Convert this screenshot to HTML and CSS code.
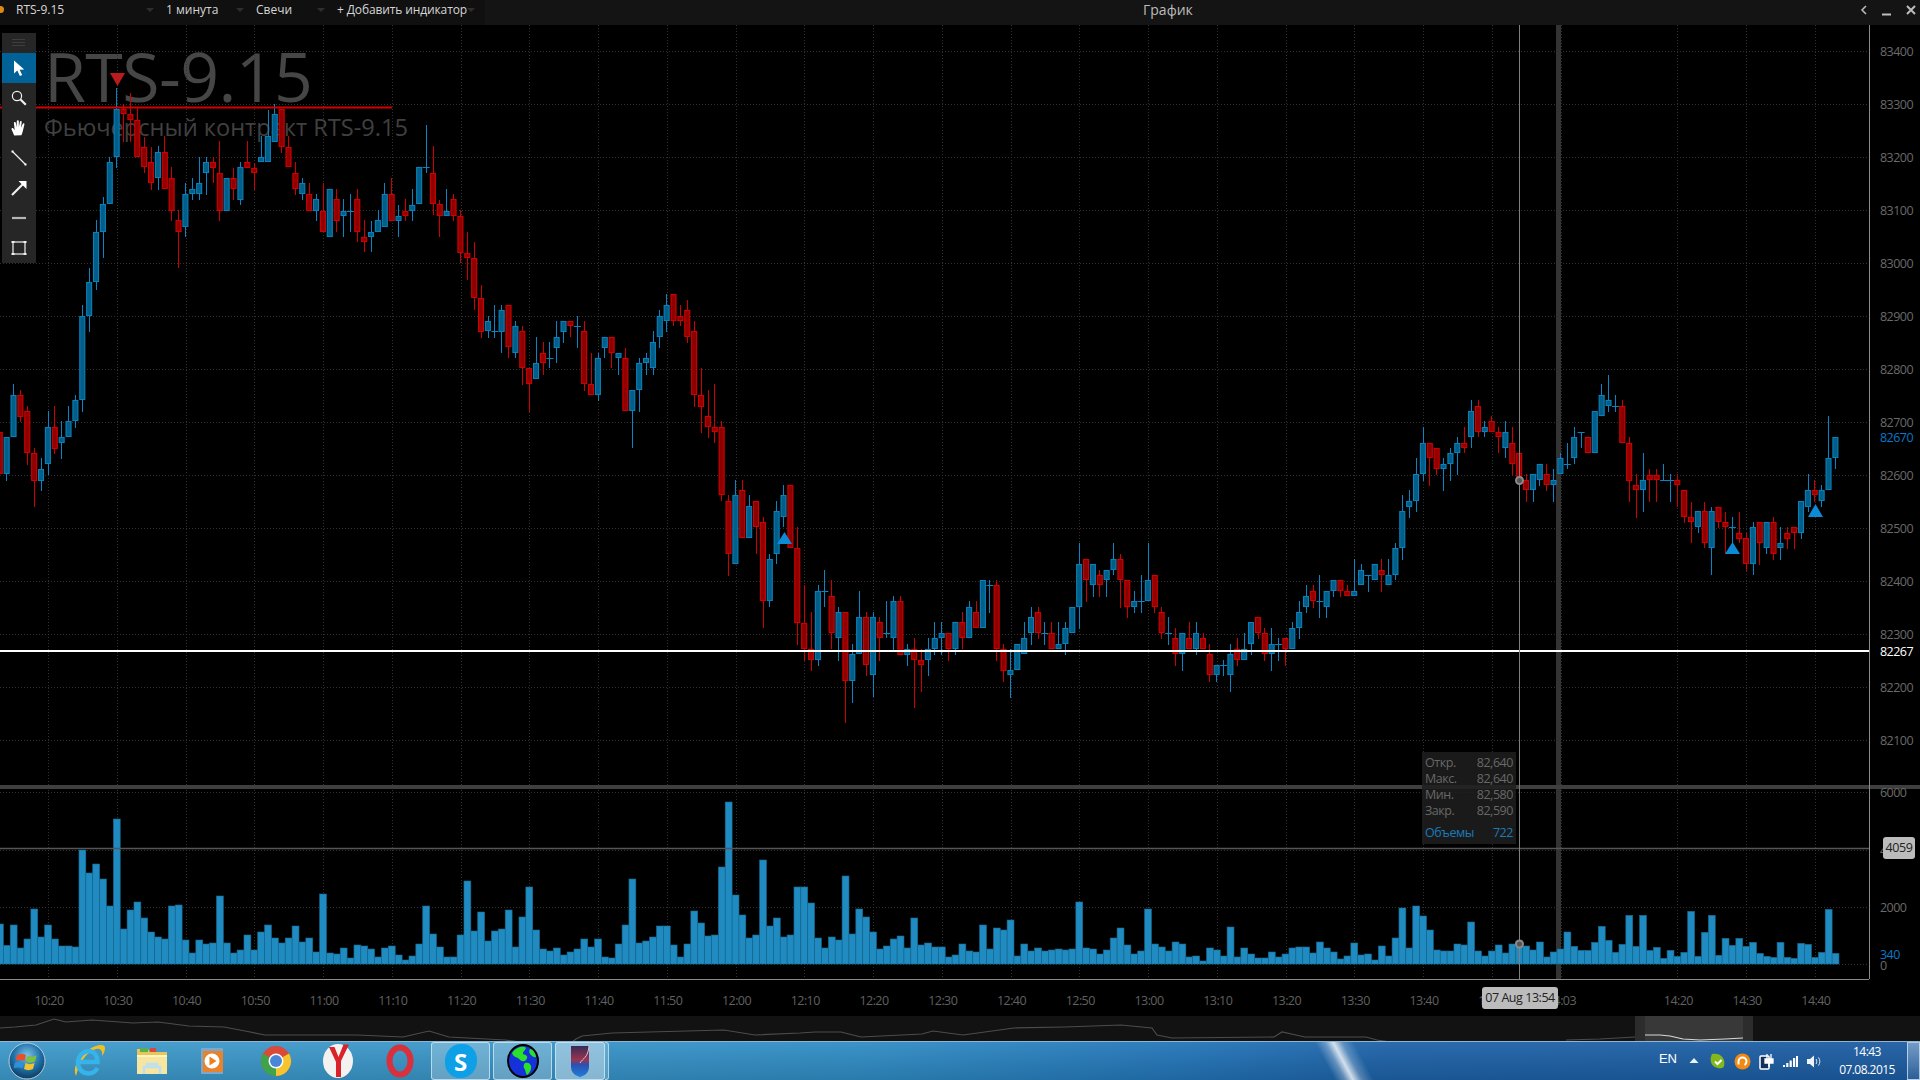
FILE: index.html
```html
<!DOCTYPE html>
<html lang="ru">
<head>
<meta charset="utf-8">
<title>График</title>
<link rel="stylesheet" href="styles.css">
</head>
<body>
<div class="app">
  <header class="topbar">
    <span class="conn-dot"></span>
    <div class="tb-tools">
      <div class="tb-item w-symbol"><span>RTS-9.15</span><i class="caret"></i></div>
      <div class="tb-item w-period"><span>1 минута</span><i class="caret"></i></div>
      <div class="tb-item w-type"><span>Свечи</span><i class="caret"></i></div>
      <div class="tb-item w-ind"><span>+ Добавить индикатор</span><i class="caret"></i></div>
    </div>
    <div class="tb-title">График</div>
    <div class="tb-win">
      <svg width="10" height="12" viewBox="0 0 10 12"><path d="M7 2 3 6l4 4" class="win-stroke"/></svg>
      <svg width="12" height="12" viewBox="0 0 12 12"><path d="M1 10.5h9" class="win-stroke win-bold"/></svg>
      <svg width="12" height="12" viewBox="0 0 12 12"><path d="M2 2l8 8M10 2l-8 8" class="win-stroke win-bold"/></svg>
    </div>
  </header>

  <main class="chart">
    <div class="watermark">
      <div class="wm-big">RTS-9.15</div>
      <div class="wm-small">Фьючерсный контракт RTS-9.15</div>
    </div>
    <svg id="plot" class="plot" viewBox="0 25 1920 991" width="1920" height="991"></svg>

    <nav class="tools">
      <div class="tool tool-handle"><svg width="16" height="8" viewBox="0 0 16 8"><path d="M1 .5h13M1 3.5h13M1 6.5h13" class="i-handle"/></svg></div>
      <div class="tool tool-on"><svg width="18" height="18" viewBox="0 0 18 18"><path d="M4 1.5v13l3.3-3 2.6 5.5 2.3-1-2.6-5.3 4.6-.3z" class="i-fill"/></svg></div>
      <div class="tool"><svg width="18" height="18" viewBox="0 0 18 18"><circle cx="7" cy="7" r="4.6" class="i-line"/><path d="M10.5 10.5l5.3 5.3" class="i-thick"/></svg></div>
      <div class="tool"><svg width="18" height="18" viewBox="0 0 18 18"><path d="M4.2 16.6 1.6 10.4c-.5-1.3 1-1.9 1.8-.9l1.3 1.7L3.9 4c-.1-1.3 1.7-1.4 1.9-.2l.8 4.4.2-6.1c.1-1.3 2-1.3 2 0l.1 6 1-5.3c.3-1.2 2-.9 1.8.3l-.7 5.6 1.7-3.8c.5-1.1 2-.5 1.7.6l-1.6 6.7c-.3 1.5-.8 2.6-1.4 4z" class="i-fill"/></svg></div>
      <div class="tool"><svg width="18" height="18" viewBox="0 0 18 18"><path d="M2.5 2.5l13 13" class="i-line"/><rect x="1.5" y="1.5" width="2" height="2" class="i-fill"/><rect x="14.5" y="14.5" width="2" height="2" class="i-fill"/></svg></div>
      <div class="tool"><svg width="18" height="18" viewBox="0 0 18 18"><path d="M2 16 15 3" class="i-thick"/><path d="M8.5 2h8v8z" class="i-fill"/></svg></div>
      <div class="tool"><svg width="18" height="18" viewBox="0 0 18 18"><path d="M2 9h14" class="i-thick i-dim"/></svg></div>
      <div class="tool"><svg width="18" height="18" viewBox="0 0 18 18"><rect x="3" y="3" width="12" height="12" class="i-line"/><path d="M1.5 3h3M13.500 3h3M1.500 15h3M13.500 15h3" class="i-thick"/></svg></div>
    </nav>

    <aside class="ohlc">
      <div class="ohlc-row"><span>Откр.</span><span>82,640</span></div>
      <div class="ohlc-row"><span>Макс.</span><span>82,640</span></div>
      <div class="ohlc-row"><span>Мин.</span><span>82,580</span></div>
      <div class="ohlc-row"><span>Закр.</span><span>82,590</span></div>
      <div class="ohlc-row ohlc-vol"><span>Объемы</span><span>722</span></div>
    </aside>
    <div class="tag tag-time">07 Aug 13:54</div>
    <div class="tag tag-vol">4059</div>
  </main>

  <section class="navigator">
    <svg class="nav-svg" viewBox="0 1016 1920 25" width="1920" height="25">
      <polyline class="nav-line" points="0,1028 15,1027 36,1025 54,1019 66,1022 92,1020 133,1023 158,1022 189,1026 224,1027 245,1031 265,1035 357,1035 403,1037 429,1031 449,1037 505,1040 520,1042"/>
      <polyline class="nav-line" points="572,1042 576,1039 582,1036 612,1033 724,1030 755,1035 800,1033 815,1032 841,1032 861,1037 922,1034 933,1031 963,1035 1014,1028 1065,1027 1121,1025 1152,1028 1157,1035 1172,1038 1274,1037 1282,1032 1305,1037 1366,1037 1377,1040 1390,1042"/>
      <polyline class="nav-line" points="1566,1040 1600,1039 1635,1037"/>
    </svg>
    <div class="nav-sel">
      <div class="nav-handle"></div>
      <svg class="nav-sel-line" viewBox="1645 1016 98 25" width="98" height="25">
        <polyline points="1645,1035 1660,1035 1670,1036 1683,1039 1700,1040 1725,1039 1743,1038"/>
      </svg>
      <div class="nav-handle"></div>
    </div>
  </section>

  <footer class="taskbar">
    <div class="tk-glare"></div>
    <div class="tk-orb">
      <svg width="40" height="40" viewBox="0 0 40 40">
        <defs>
          <radialGradient id="orbg" cx=".5" cy=".35" r=".7"><stop offset="0" stop-color="#7fc4e8"/><stop offset=".55" stop-color="#1d6fa8"/><stop offset="1" stop-color="#0c2f4f"/></radialGradient>
        </defs>
        <circle cx="20" cy="20" r="18" fill="url(#orbg)" stroke="#bcd" stroke-width="1"/>
        <path d="M10 14c3-1.500 6-1.500 9 0l-1.500 6c-3-1.500-6-1.500-9 0z" fill="#e8502c"/>
        <path d="M20.500 14.500c3 1.500 6 1.500 9 0l-1.500 6c-3 1.500-6 1.500-9 0z" fill="#7fc03c"/>
        <path d="M8 21.500c3-1.500 6-1.500 9 0l-1.500 6c-3-1.500-6-1.500-9 0z" fill="#2f8fd8"/>
        <path d="M18.500 22c3 1.500 6 1.500 9 0l-1.500 6c-3 1.500-6 1.500-9 0z" fill="#f4c22c"/>
      </svg>
    </div>
    <div class="tk-app">
      <svg width="34" height="36" viewBox="0 0 34 36">
        <path d="M3 33C-1 25 6 12 15 7 23 2 32 0 32 5c0 3-1 5-3 8 1-6-2-8-6-7C14 8 6 20 3 33z" fill="#f2c11f"/>
        <path d="M7.500 19h17c0-7-4-11-9-11S5 13 5 19.500 9.500 30.500 15.500 30.500c4 0 7-2 9-5.500" class="ie-ring"/>
      </svg>
    </div>
    <div class="tk-app">
      <svg width="36" height="36" viewBox="0 0 36 36">
        <path d="M3 6h11l2 3h17v22H3z" fill="#e8c65a"/>
        <path d="M6 5h8v4H6z" fill="#5cb04a"/>
        <path d="M16 5h6v4h-6z" fill="#d9473c"/>
        <path d="M3 12h30v19H3z" fill="#f7e6a0"/>
        <path d="M3 12h30v2H3z" fill="#fff4c6"/>
        <path d="M10 31v-7h16v7M13 24v-3h10v3" fill="none" stroke="#bcdff2" stroke-width="2.500"/>
      </svg>
    </div>
    <div class="tk-app">
      <svg width="32" height="36" viewBox="0 0 32 36">
        <rect x="3" y="5" width="22" height="26" rx="1" fill="#7da8c9"/>
        <rect x="5" y="8" width="20" height="21" fill="#e9832b"/>
        <circle cx="14" cy="18" r="7.500" fill="#fff"/>
        <path d="M11.500 13.500v9l7-4.500z" fill="#ee7f1e"/>
      </svg>
    </div>
    <div class="tk-app">
      <svg width="36" height="36" viewBox="0 0 36 36">
        <circle cx="18" cy="18" r="15" fill="#d94a3a"/>
        <path d="M18 18 31 10.500A15 15 0 0 1 18 33z" fill="#f6c42c"/>
        <path d="M18 18 18 33A15 15 0 0 1 5 10.500z" fill="#3ea34a"/>
        <circle cx="18" cy="18" r="7.500" fill="#fff"/>
        <circle cx="18" cy="18" r="6" fill="#4a86d8"/>
      </svg>
    </div>
    <div class="tk-app">
      <svg width="34" height="38" viewBox="0 0 34 38">
        <ellipse cx="17" cy="19" rx="15" ry="17" fill="#f4f2f0"/>
        <path d="M8 5h5.500l4 10 5-12.500H28L20 19v16h-5V20z" fill="#d8232a"/>
      </svg>
    </div>
    <div class="tk-app">
      <svg width="34" height="38" viewBox="0 0 34 38">
        <ellipse cx="17" cy="19" rx="10.500" ry="13.500" class="opera-ring"/>
      </svg>
    </div>
    <div class="tk-app tk-btn">
      <div class="skype"><span>S</span></div>
    </div>
    <div class="tk-app tk-btn">
      <svg width="34" height="36" viewBox="0 0 34 36">
        <ellipse cx="17" cy="18" rx="15" ry="16" fill="#1432d8" stroke="#000" stroke-width="2"/>
        <path d="M6 10c4-6 10-7 13-6 3 2-3 4-2 7 3 1 6 2 3 6-3 3-6 0-8-2-3-1-5-2-6-5z" fill="#2be02b"/>
        <path d="M19 20c3-1 5 0 6 3 1 3-2 8-4 9-2-2-1-5-3-7-1-2 0-4 1-5zM24 6c3 0 6 5 6 8-2 1-4-1-6-3-1-2-1-4 0-5z" fill="#2be02b"/>
      </svg>
    </div>
    <div class="tk-app tk-btn tk-btn-last">
      <svg width="26" height="36" viewBox="0 0 26 36">
        <defs><linearGradient id="apg" x1="0" y1="0" x2="0" y2="1"><stop offset="0" stop-color="#3a2a55"/><stop offset=".45" stop-color="#9a3550"/><stop offset=".6" stop-color="#2d4fb0"/><stop offset="1" stop-color="#1f7fd8"/></linearGradient></defs>
        <path d="M4 3h18v21c0 6-5 9-9 10-4-1-9-4-9-10z" fill="url(#apg)"/>
        <path d="M22 3c-1 12-6 12-9 17" stroke="#e8c0d0" stroke-width="1" fill="none"/>
      </svg>
    </div>
    <div class="tk-stack"></div>

    <div class="tray">
      <span class="tray-lang">EN</span>
      <div class="tray-ic"><svg width="10" height="8" viewBox="0 0 10 8"><path d="M5 1 9.500 6H.5z" fill="#e8f2fa"/></svg></div>
      <div class="tray-ic"><svg width="16" height="17" viewBox="0 0 16 17"><path d="M2 1c4-1 9 0 11 4 2 3 2 10-1 10-4 1-10-1-11-6C0 6 1 3 2 1z" fill="#82b81c"/><path d="M5 8.500l2.500 2.500 4-4" fill="none" stroke="#fff" stroke-width="2"/></svg></div>
      <div class="tray-ic"><svg width="17" height="17" viewBox="0 0 17 17"><circle cx="8.500" cy="8.500" r="8" fill="#f08a12"/><path d="M4.500 11.500V8.500a4 4 0 0 1 8 0c0 2-1 3-2 3.500" fill="none" stroke="#fff" stroke-width="2"/></svg></div>
      <div class="tray-ic"><svg width="15" height="17" viewBox="0 0 15 17"><rect x="1" y="3" width="9" height="13" rx="1" fill="#12305c" stroke="#fff" stroke-width="1.500"/><path d="M6 6h8v4H6zM8 1v5M12 1v5M10 10v4" fill="#fff" stroke="#fff" stroke-width="1.300"/></svg></div>
      <div class="tray-ic"><svg width="15" height="12" viewBox="0 0 15 12"><path d="M0 10h2v2H0zM3.200 8h2.200v4H3.200zM6.600 5.500h2.200V12H6.600zM10 3h2.200v9H10zM13 1h2v11h-2z" fill="#fff"/></svg></div>
      <div class="tray-ic"><svg width="15" height="13" viewBox="0 0 15 13"><path d="M0 4h3l4-3.500v12L3 9H0z" fill="#eef3f8"/><path d="M9 4c1 1.200 1 3.800 0 5M11.500 2.500c1.800 2.400 1.800 5.600 0 8" fill="none" stroke="#dfe8f0" stroke-width="1"/></svg></div>
      <div class="clock"><div>14:43</div><div>07.08.2015</div></div>
    </div>
    <div class="show-desktop"></div>
  </footer>
</div>
<script src="chart.js"></script>
</body>
</html>
```
FILE: styles.css
```css
* { box-sizing: border-box; }
html, body { margin: 0; padding: 0; width: 1920px; height: 1080px; overflow: hidden; background: #000; }
body { font-family: "Open Sans", "Liberation Sans", sans-serif; }
.app { display: flex; flex-direction: column; width: 1920px; height: 1080px; }

/* top bar */
.topbar { position: relative; display: flex; align-items: center; height: 25px; background: #141414; color: #c8c8c8; font-size: 12px; flex: none; }
.conn-dot { position: absolute; left: -3px; top: 6px; width: 7px; height: 7px; border-radius: 50%; background: #e08a14; }
.tb-tools { display: flex; align-items: flex-start; height: 25px; width: 485px; padding-left: 16px; padding-top: 1px; background: #101010; }
.tb-item { display: flex; align-items: center; justify-content: space-between; color: #d6d6d6; white-space: nowrap; padding-right: 12px; line-height: 17px; }
.w-symbol { width: 150px; }
.w-period { width: 90px; }
.w-type { width: 81px; }
.w-ind { width: 148px; letter-spacing: -.12px; }
.caret { width: 0; height: 0; border-left: 4px solid transparent; border-right: 4px solid transparent; border-top: 4px solid #2e2e2e; }
.tb-title { position: absolute; left: 1143px; top: 0; line-height: 19px; font-size: 14px; color: #bdbdbd; }
.tb-win { margin-left: auto; display: flex; align-items: center; gap: 12px; padding-right: 3px; margin-top: -6px; }
.win-stroke { fill: none; stroke: #bdbdbd; stroke-width: 1.5; }
.win-bold { stroke-width: 2; }

/* chart area */
.chart { position: relative; flex: 1; background: #000; overflow: hidden; }
.plot { position: absolute; left: 0; top: 0; display: block; }
.watermark { position: absolute; left: 44px; top: 13px; color: #464646; }
.wm-big { font-size: 68px; font-weight: 400; line-height: 76px; letter-spacing: -.6px; }
.wm-small { font-size: 23.6px; line-height: 30px; color: #404040; margin-top: -2px; }

.grid { stroke: #303030; stroke-width: 1; stroke-dasharray: 1 2; fill: none; }
.frame { stroke: #8a8a8a; stroke-width: 1; fill: none; }
.cross { stroke: #7f7f7f; stroke-width: 1; }
.cross-old { stroke: #333; stroke-width: 5; }
.divider { stroke: #3f3f3f; stroke-width: 4; }
.vol-level { stroke: #565656; stroke-width: 1.5; }
.price-line { stroke: #fff; stroke-width: 2; }
.hi-line { stroke: #d40000; stroke-width: 2; }
.marker-hi { fill: #b81c1c; }
.marker-up { fill: #0d8ad6; }
.dot { fill: #555; stroke: #8a8a8a; stroke-width: 2; }
.wick-b { stroke: #0a84c4; stroke-width: 1; }
.wick-r { stroke: #d00000; stroke-width: 1; }
.body-b { fill: #005e88; stroke: #0a7fb8; stroke-width: 1.1; }
.body-r { fill: #8e0000; stroke: #d00000; stroke-width: 1.1; }
.vbar { fill: #1f8bc0; stroke: #17688f; stroke-width: .6; }
.lab { font-family: "Open Sans", "Liberation Sans", sans-serif; font-size: 12.5px; letter-spacing: -.55px; fill: #6a6a6a; }
.lab-time { text-anchor: middle; fill: #606060; }
.lab-cur { fill: #0a78c8; }
.lab-last { fill: #fff; }

/* drawing tools */
.tools { position: absolute; left: 2px; top: 8px; width: 34px; background: #262626; display: flex; flex-direction: column; }
.tool { height: 30px; display: flex; align-items: center; justify-content: center; }
.tool-handle { height: 20px; }
.tool-on { background: #006296; }
.i-fill { fill: #fff; }
.i-line { fill: none; stroke: #f0f0f0; stroke-width: 1.2; }
.i-thick { fill: none; stroke: #f0f0f0; stroke-width: 2.2; }
.i-dim { stroke: #b5b5b5; }
.i-handle { fill: none; stroke: #3e3e3e; stroke-width: 1; }

/* ohlc hint */
.ohlc { position: absolute; left: 1422px; top: 727px; width: 94px; height: 92px; padding: 3px 3px 0; background: rgba(30,30,30,.85); font-size: 12.5px; letter-spacing: -.45px; line-height: 16px; color: #686868; }
.ohlc-row { display: flex; justify-content: space-between; }
.ohlc-vol { margin-top: 6px; color: #1b7cbc; }

.tag { position: absolute; background: #bcbcbc; color: #222; border-radius: 3px; font-size: 12.5px; letter-spacing: -.45px; text-align: center; white-space: nowrap; }
.tag-time { left: 1482px; top: 962px; width: 76px; height: 22px; line-height: 21px; }
.tag-vol { left: 1883px; top: 812px; width: 32px; height: 22px; line-height: 22px; }

/* navigator */
.navigator { position: relative; height: 25px; background: #121212; flex: none; overflow: hidden; }
.nav-svg { display: block; }
.nav-line { fill: none; stroke: #4c4c4c; stroke-width: 1.2; }
.nav-sel { position: absolute; left: 1635px; top: 0; width: 118px; height: 25px; display: flex; background: #383838; }
.nav-handle { width: 10px; background: #2c2c2c; flex: none; }
.nav-sel-line { flex: none; display: block; }
.nav-sel-line polyline { fill: none; stroke: #d8d8d8; stroke-width: 1.2; }

/* taskbar */
.taskbar { position: relative; height: 39px; flex: none; display: flex; align-items: center; color: #fff;
  border-top: 1px solid #8fb6d2;
  background: linear-gradient(180deg, rgba(255,255,255,.06), rgba(0,0,0,.12)), linear-gradient(90deg, #3d9acb 0, #3a96c8 22%, #2f8cc4 45%, #2274b8 62%, #1d62a8 72%, #1c5ca2 100%); }
.tk-glare { position: absolute; left: 1288px; top: 0; width: 110px; height: 38px; background: linear-gradient(62deg, transparent 36%, rgba(255,255,255,.3) 44%, rgba(255,255,255,.8) 50%, rgba(255,255,255,.25) 57%, transparent 66%); }
.tk-orb { width: 59px; height: 38px; padding-right: 5px; display: flex; align-items: center; justify-content: center; flex: none; }
.tk-app { position: relative; width: 62px; height: 38px; display: flex; align-items: center; justify-content: center; flex: none; }
.tk-btn { border: 1px solid rgba(210,235,250,.75); border-radius: 3px; background: rgba(255,255,255,.24); width: 59px; margin-right: 3px; }
.tk-btn-last { width: 50px; background: rgba(255,255,255,.42); margin-right: 0; }
.tk-stack { width: 4px; height: 38px; border: 1px solid rgba(210,235,250,.7); border-left: 0; border-radius: 0 3px 3px 0; background: rgba(255,255,255,.2); flex: none; }
.ie-ring { fill: none; stroke: #35b4ec; stroke-width: 4.5; }
.opera-ring { fill: none; stroke: #d8303c; stroke-width: 6; }
.skype { width: 32px; height: 34px; border-radius: 50% 45% 50% 45%; background: #0ea0e6; display: flex; align-items: center; justify-content: center; font: 700 24px "Open Sans", sans-serif; color: #fff; }
.tray { margin-left: auto; display: flex; align-items: center; height: 38px; padding-right: 8px; }
.tray-lang { font-family: "Liberation Sans", sans-serif; font-size: 13px; margin-right: 5px; margin-top: -6px; }
.tray-ic { width: 24px; height: 20px; display: flex; align-items: center; justify-content: center; flex: none; }
.clock { margin-left: 9px; width: 64px; font-size: 12px; line-height: 18px; text-align: center; letter-spacing: -.55px; }
.show-desktop { width: 13px; height: 38px; border: 1px solid rgba(220,235,250,.7); background: linear-gradient(180deg, rgba(255,255,255,.35), rgba(255,255,255,.08)); flex: none; }
```
FILE: chart.js
```js
/* c: 0 = up, 1 = down, 2 = doji; [c, bodyTop, bodyBottom, wickTop, wickBottom] in px; first entry is k = -7 */
var B = 0, R = 1, D = 2;
var candles = [
[R,432,474,425,491],[B,437,474,437,481],[B,395,437,384,437],[R,395,417,390,422],[R,411,453,406,465],[R,453,481,448,507],[B,469,481,458,491],
[B,427,464,411,475],[R,427,449,406,454],[B,437,443,421,459],[B,421,437,406,437],[B,400,421,395,428],[B,316,400,305,412],[B,282,316,268,332],[B,232,282,220,290],[B,204,232,197,258],[B,162,204,157,204],
[B,109,157,88,168],[R,109,114,104,142],[R,114,120,93,142],[R,120,157,107,157],[R,147,167,137,173],[R,162,183,147,190],[B,152,178,146,190],[R,152,189,136,189],[R,178,211,167,221],[R,220,232,210,268],
[B,194,227,183,237],[B,189,194,178,200],[B,183,194,157,200],[B,162,173,157,195],[R,162,168,157,183],[R,173,211,141,221],[B,178,211,178,211],[R,178,189,168,200],[B,167,200,162,205],[R,162,168,141,168],
[R,168,173,163,190],[B,157,162,136,162],[B,136,162,110,162],[B,114,142,104,142],[R,109,147,109,153],[R,147,167,136,167],[R,173,189,162,195],[B,183,194,178,200],[R,194,211,183,211],[B,199,211,194,221],
[R,211,232,183,232],[B,189,237,189,237],[R,199,221,189,232],[B,211,216,199,237],[D,211,211,194,232],[R,199,232,189,242],[R,237,242,220,252],[B,232,237,221,252],[B,220,232,210,232],[B,194,227,183,227],
[R,194,221,178,221],[B,216,221,205,237],[R,211,216,199,221],[B,205,211,189,221],[B,167,204,167,204],[D,167,167,125,173],[R,173,204,146,215],[R,204,216,200,237],[B,211,216,189,216],[R,199,216,194,221],
[R,216,253,210,263],[R,253,258,232,280],[R,258,298,242,310],[R,298,332,285,338],[B,321,331,316,338],[D,331,331,305,338],
[B,310,332,305,353],[R,305,347,305,358],[B,326,353,321,358],[R,331,368,326,385],[R,368,384,368,412],[B,363,379,337,379],[R,353,363,342,375],[D,358,358,342,368],[B,337,348,321,363],[B,321,332,321,343],[R,321,326,321,337],[D,326,326,316,348],
[R,331,384,321,391],[R,384,395,353,395],[B,358,395,353,401],[B,337,348,337,358],[R,337,353,337,368],[B,353,358,353,375],[R,358,411,348,411],[B,390,411,390,448],[B,363,390,358,412],[B,358,363,353,375],
[B,342,368,331,375],[B,316,337,310,348],[B,305,321,294,332],[R,294,321,294,326],[R,316,321,305,326],[R,310,337,300,343],[R,331,395,321,407],[R,395,407,368,433],[R,416,427,390,438],[R,427,432,384,443],
[R,427,495,421,501],[R,501,554,495,576],[B,495,564,480,564],[R,490,538,480,538],[B,506,538,495,538],[R,501,527,501,554],[R,522,601,517,628],[B,559,601,554,607],[B,511,554,501,564],[B,495,517,485,527],
[R,485,548,485,548],[R,548,623,527,645],[R,623,649,585,661],[R,649,660,612,671],[B,591,660,585,666],[D,591,591,570,607],[R,596,633,580,649],[B,612,638,607,661],[R,612,681,612,723],[B,654,681,644,703],
[B,617,654,591,654],[R,617,665,612,676],[B,617,675,612,697],[R,622,638,617,661],[D,633,633,601,638],[B,601,638,596,650],[R,601,655,596,655],[B,649,655,644,666],[R,649,660,638,708],[R,660,665,649,692],
[B,649,660,638,676],[B,638,649,622,655],[B,633,638,622,655],[R,633,649,633,661],[B,622,649,622,655],[R,622,638,612,649],[B,607,638,601,638],[R,612,628,601,628],[B,580,628,580,628],[D,585,585,580,613],[R,585,649,580,661],
[R,649,671,644,682],[B,670,675,649,698],[B,644,670,644,670],[B,638,654,622,654],[B,617,633,607,645],[R,612,633,607,639],[D,633,633,622,645],[R,633,649,622,649],[B,644,649,622,649],[B,628,644,622,655],
[B,607,633,607,633],[B,564,607,543,629],[R,559,580,559,602],[B,564,585,564,597],[R,575,585,570,597],[B,570,580,570,597],[B,559,570,543,575],[R,559,580,554,608],[R,580,607,580,618],[B,601,607,591,613],
[D,601,601,575,613],[B,580,601,543,601],[R,575,607,575,613],[R,612,633,607,639],[D,633,633,617,645],[R,638,654,628,666],[B,633,654,633,671],[R,638,649,622,649],[B,633,649,622,655],[R,638,649,633,649],
[R,654,675,644,682],[B,665,675,665,682],[D,665,665,660,676],[B,654,675,644,692],[R,649,660,638,666],[B,649,660,633,660],[B,622,644,622,655],[R,617,633,617,639],[R,633,654,628,661],[B,644,654,628,671],
[D,644,644,638,661],[R,638,649,638,666],[B,628,649,622,649],[B,612,628,601,639],[B,596,607,585,613],[R,591,601,585,608],[D,601,601,575,618],[B,591,607,591,618],[B,580,591,580,597],[R,580,591,580,597],
[R,591,596,585,596],[B,591,596,559,596],[B,570,585,564,585],[D,575,575,575,592],[B,564,580,564,580],[R,570,575,559,592],[B,575,585,559,585],[B,548,575,543,580],[B,511,548,495,560],[B,501,507,490,518],
[B,474,501,458,512],[B,443,474,427,481],[R,443,458,443,486],[R,448,469,448,475],[B,464,469,458,491],[B,453,464,448,481],[B,443,453,437,475],[R,443,448,427,453],[B,411,437,400,448],[R,406,432,400,437],
[B,427,432,421,437],[R,421,432,416,432],[R,432,437,427,453],[B,432,448,421,458],[R,443,464,427,475],[R,453,480,453,480],[R,480,490,474,502],[B,474,490,474,502],[B,464,480,464,486],[R,474,485,464,491],
[B,480,485,469,502],[B,458,474,453,474],[D,464,464,443,469],[B,437,458,427,464],[D,432,432,432,448],[R,437,453,437,453],[B,411,453,411,453],[B,395,416,384,416],[B,400,406,375,412],[D,406,406,395,412],
[R,406,443,400,443],[R,443,481,437,502],[R,485,490,474,518],[B,480,490,453,512],[R,475,480,469,502],[R,475,480,469,502],[D,480,480,464,480],[D,480,480,474,502],[R,480,485,474,507],[R,490,517,490,523],
[R,517,522,502,543],[B,511,527,511,533],[R,511,543,502,548],[B,511,548,507,575],[R,507,522,507,528],[R,522,527,512,554],[D,527,527,517,543],[R,533,539,512,543],[R,538,564,533,571],[B,527,564,522,575],
[R,522,543,522,565],[B,522,548,522,554],[R,522,554,517,560],[B,543,548,527,560],[R,533,539,527,549],[R,527,533,527,549],[B,501,533,501,539],[B,490,507,474,512],[R,490,495,480,502],[B,490,501,485,507],
[B,458,490,416,490],[B,437,458,437,469]
];
/* vol: top edge in the zoomed reading; height = (553 - v) / 3 px; first entry is k = -7 */
var vols = [433,497,436,505,478,388,472,436,478,499,499,502,211,280,253,298,379,118,448,391,367,415,457,472,478,379,376,481,520,481,493,490,349,490,520,511,466,511,457,436,475,490,475,439,487,475,517,343,520,523,505,535,496,499,508,532,505,499,526,541,529,493,379,463,502,532,532,466,304,454,397,484,454,448,391,502,412,322,451,508,514,505,526,517,508,478,502,478,532,535,493,436,298,490,484,472,439,439,496,532,493,394,430,469,466,262,67,346,406,475,466,241,439,415,472,466,322,322,370,475,505,472,481,289,463,388,412,457,508,499,478,469,505,415,496,490,502,502,532,526,493,514,517,436,508,445,451,421,529,493,514,505,514,511,508,511,508,367,505,508,523,511,475,445,496,523,514,388,493,502,514,487,493,532,529,544,505,511,529,442,532,505,523,535,535,517,532,523,505,502,502,520,487,505,517,538,529,490,526,523,541,499,529,475,385,505,379,409,451,511,514,514,493,496,427,514,529,514,496,520,493,484,499,511,487,532,517,508,457,500,512,512,488,440,482,518,494,407,500,407,512,503,536,512,530,518,395,530,458,407,527,476,497,476,500,488,521,530,533,488,533,536,491,494,533,518,389,521];

var NS = "http://www.w3.org/2000/svg";
var plot = document.getElementById("plot");
function el(tag, attrs, cls, text) {
  var n = document.createElementNS(NS, tag);
  for (var a in attrs) n.setAttribute(a, attrs[a]);
  if (cls) n.setAttribute("class", cls);
  if (text !== undefined) n.textContent = text;
  plot.appendChild(n);
  return n;
}
function line(x1, y1, x2, y2, cls) { return el("line", {x1: x1, y1: y1, x2: x2, y2: y2}, cls); }
function X(k) { return 48 + 6.875 * k; }
function P(p) { return 421.5 + (82700 - p) * 0.53; }
function label(x, y, s, cls) { return el("text", {x: x, y: y}, "lab " + (cls || ""), s); }

/* grid */
var ticks = [];
for (var k = 0; k <= 210; k += 10) {
  var m = 620 + k, h = Math.floor(m / 60), mm = m % 60;
  ticks.push([k, h + ":" + (mm < 10 ? "0" : "") + mm]);
}
ticks.push([220, "14:03"], [237, "14:20"], [247, "14:30"], [257, "14:40"]);
ticks.forEach(function (t) {
  var x = Math.round(X(t[0])) + 0.5;
  line(x, 25, x, 979, "grid");
  el("text", {x: X(t[0]) + 1, y: 1005}, "lab lab-time", t[1]);
});
for (var p = 83400; p >= 82100; p -= 100) {
  var y = Math.round(P(p)) + 0.5;
  line(0, y, 1869, y, "grid");
  label(1880, y + 4, String(p));
}
[792.5, 850.5, 907.5, 964.5].forEach(function (y) { line(0, y, 1869, y, "grid"); });

/* markers of the old cursor and the session */
line(1558.5, 25, 1558.5, 979, "cross-old");

/* candles */
candles.forEach(function (c, i) {
  var cx = X(i - 7), wx = Math.floor(cx) + 0.5;
  var w = c[0] === R ? "wick-r" : "wick-b";
  line(wx, c[3], wx, c[4], w);
  if (c[0] === D) {
    line(cx - 3.5, c[1] + 0.5, cx + 3.5, c[1] + 0.5, w);
  } else {
    el("rect", {x: cx - 2.6, y: c[1] + 0.5, width: 5, height: Math.max(c[2] - c[1] - 1, 2)}, c[0] === R ? "body-r" : "body-b");
  }
});

/* volume */
vols.forEach(function (v, i) {
  var h = (553 - v) / 3;
  el("rect", {x: X(i - 7) - 3.4, y: 964 - h, width: 6.875, height: h}, "vbar");
});

/* lines */
line(0, 787, 1920, 787, "divider");
line(0, 848.5, 1869, 848.5, "vol-level");
line(0, 107.5, 392, 107.5, "hi-line");
line(0, 651, 1869, 651, "price-line");
line(1519.5, 25, 1519.5, 979, "cross");
line(1869.5, 25, 1869.5, 979, "frame");
line(0, 979.5, 1869, 979.5, "frame");

/* markers */
el("path", {d: "M110 73h15l-7.500 13z"}, "marker-hi");
el("path", {d: "M777 544h15l-7.500-12z"}, "marker-up");
el("path", {d: "M1725 554h15l-7.500-12z"}, "marker-up");
el("path", {d: "M1808 517h15l-7.500-13z"}, "marker-up");
el("circle", {cx: 1519.5, cy: 480.5, r: 3.5}, "dot");
el("circle", {cx: 1519.5, cy: 944, r: 3.5}, "dot");

/* scale extras */
label(1880, 442, "82670", "lab-cur");
label(1880, 656, "82267", "lab-last");
label(1880, 797, "6000");
label(1880, 855, "4000");
label(1880, 912, "2000");
label(1880, 959, "340", "lab-cur");
label(1880, 970, "0");
```
